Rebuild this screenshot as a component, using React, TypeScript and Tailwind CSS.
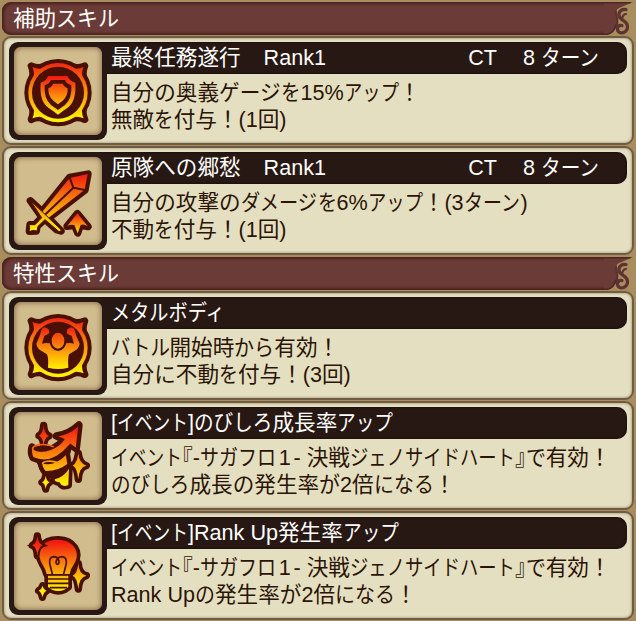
import type { ReactNode } from "react";

const OUTLINE = "#4a1004";

const Gradient = ({ id, y1, y2 }: { id: string; y1: number; y2: number }) => (
  <linearGradient id={id} gradientUnits="userSpaceOnUse" x1="0" x2="0" y1={y1} y2={y2}>
    <stop offset="0" stopColor="#f01a10" />
    <stop offset="0.5" stopColor="#fb8a0c" />
    <stop offset="1" stopColor="#fff200" />
  </linearGradient>
);

// Round badge with four pointed corners, shared by the shield and the body icon
const Badge = ({ fill }: { fill: string }) => {
  const spikes =
    "M79 78 Q100 88 128 78 L190 78 Q218 88 239 78 Q229 99 239 127 L239 189 Q229 217 239 238 Q218 228 190 238 L128 238 Q100 228 79 238 Q89 217 79 189 L79 127 Q89 99 79 78Z";
  return (
    <>
      <path d={spikes} fill={OUTLINE} stroke={OUTLINE} strokeWidth="22" strokeLinejoin="round" />
      <circle cx="159" cy="158" r="101" fill={OUTLINE} />
      <path d={spikes} fill={fill} transform="translate(159 158) scale(.96) translate(-159 -158)" />
      <circle cx="159" cy="158" r="89" fill={fill} />
      <circle cx="159" cy="158" r="78" fill={OUTLINE} />
    </>
  );
};

const ShieldIcon = () => (
  <svg viewBox="12 6 294 294" className="size-full">
    <defs>
      <Gradient id="shield-badge" y1={58} y2={238} />
      <Gradient id="shield-body" y1={110} y2={224} />
    </defs>
    <Badge fill="url(#shield-badge)" />
    <path
      d="M129 108 H188 Q192 122 211 128 Q215 184 186 205 Q172 214 159 224 Q146 214 132 205 Q102 184 107 128 Q126 122 129 108Z"
      fill="url(#shield-body)"
    />
    <path
      d="M138 120 H180 Q184 131 199 136 Q202 176 180 195 Q170 202 159 210 Q148 202 138 195 Q116 176 119 136 Q134 131 138 120Z"
      fill={OUTLINE}
    />
    <path
      d="M145 131 H173 Q178 141 188 145 Q189 169 173 182 L159 193 L145 182 Q129 169 130 145 Q140 141 145 131Z"
      fill="url(#shield-body)"
    />
  </svg>
);

const BodyIcon = () => (
  <svg viewBox="12 6 294 294" className="size-full">
    <defs>
      <Gradient id="body-badge" y1={58} y2={238} />
      <Gradient id="body-man" y1={92} y2={222} />
    </defs>
    <Badge fill="url(#body-badge)" />
    <path
      d="M109 105 Q114 94 123 98 L131 103 L133 114 Q125 121 118 122 L111 146 Q122 143 134 145 L149 157 Q159 171 170 157 L184 145 Q197 143 207 146 L200 122 Q192 120 185 114 L187 103 L195 98 Q204 94 209 105 L213 120 L224 146 Q222 160 208 168 L192 178 Q188 191 190 218 Q160 226 129 218 Q131 190 126 178 L110 168 Q96 160 94 146 L105 120Z"
      fill="url(#body-man)"
    />
    <ellipse cx="159" cy="137" rx="25" ry="31" fill={OUTLINE} />
    <ellipse cx="159" cy="137" rx="19" ry="24" fill="url(#body-man)" />
  </svg>
);

const SwordIcon = () => (
  <svg viewBox="12 6 294 294" className="size-full">
    <defs>
      <Gradient id="sword" y1={70} y2={244} />
      <Gradient id="sword-up" y1={190} y2={254} />
    </defs>
    <g stroke={OUTLINE} strokeWidth="22" strokeLinejoin="round" fill={OUTLINE}>
      <path d="M194 82 L249 72 L240 120 L130 205 L112 184Z" />
      <path d="M76 152 L119 192 L168 243 L155 239 L120 208 L96 229 L94 243 L73 244 L75 224 L91 223 L111 202Z" />
      <path d="M217 191 L249 230 L226 226 L218 249 L209 226 L186 229Z" />
    </g>
    <path d="M194 84 L248 72 L239 119 L129 205 L112 185Z" fill="url(#sword)" />
    <path d="M194 83 L205 113 L240 120 M205 113 L120 194" fill="none" stroke={OUTLINE} strokeWidth="6" />
    <path
      d="M74 149 L120 193 L170 241 L162 245 L120 209 L99 229 L96 243 Q84 239 72 245 Q76 233 72 224 L90 224 L110 203Z"
      fill="url(#sword)"
      stroke={OUTLINE}
      strokeWidth="3"
    />
    <path d="M217 190 L248 229 Q236 221 227 225 L218 250 L208 225 Q196 222 187 228Z" fill="url(#sword-up)" />
  </svg>
);

const SpiralArrowIcon = () => {
  const arrow = "M222 66 L214 137 L196 124 Q140 190 84 164 Q76 148 81 132 Q95 153 137 139 Q166 127 176 109 L154 99 Q193 94 222 66Z";
  const middle = "M184 152 L189 184 Q160 207 121 206 Q109 194 110 178 Q144 192 184 152Z";
  const bottom = "M192 197 L190 246 Q170 254 164 238 Q148 237 149 229 Q176 222 192 197Z";
  const sparks = [
    "M116 67 Q118 94 132 99 Q118 103 116 128 Q114 103 102 98 Q114 93 116 67Z",
    "M220 151 Q222 181 244 188 Q222 192 220 229 Q216 192 203 188 Q216 182 220 151Z",
    "M122 218 Q124 233 134 238 Q124 242 122 258 Q120 242 111 238 Q120 233 122 218Z",
  ];
  return (
    <svg viewBox="12 12 294 294" className="size-full">
      <defs>
        <Gradient id="spiral" y1={72} y2={244} />
      </defs>
      <g fill={OUTLINE} stroke={OUTLINE} strokeWidth="22" strokeLinejoin="round">
        <path d={arrow} />
        <path d={middle} />
        <path d={bottom} />
        {sparks.map((d) => (
          <path key={d} d={d} />
        ))}
        <path d="M90 140 L119 205 L160 225 L188 140Z" />
      </g>
      <g fill="url(#spiral)">
        <path d={bottom} />
        <path d={middle} stroke={OUTLINE} strokeWidth="4" />
        <path d={arrow} stroke={OUTLINE} strokeWidth="4" />
        {sparks.map((d) => (
          <path key={d} d={d} />
        ))}
      </g>
      <path
        d="M84 141 C76 125 118 119 146 131 M113 183 C112 175 136 170 160 179"
        fill="none"
        stroke="url(#spiral)"
        strokeWidth="5"
      />
    </svg>
  );
};

const BulbIcon = () => {
  const bulb = "M125 177 Q122 162 112 147 C88 105 115 73 160 74 C205 75 230 112 207 147 Q196 162 194 177Z";
  const base = "M129 181 H190 V216 L178 224 Q160 232 141 224 L129 216Z";
  const sparks = [
    "M97 63 Q99 85 113 91 Q100 95 97 122 Q95 95 82 91 Q95 85 97 63Z",
    "M220 146 Q222 177 244 182 Q222 187 220 222 Q216 187 203 182 Q216 177 220 146Z",
    "M113 212 Q115 223 125 227 Q115 232 112 247 Q110 232 101 227 Q110 223 113 212Z",
  ];
  return (
    <svg viewBox="12 6 294 294" className="size-full">
      <defs>
        <Gradient id="bulb" y1={80} y2={222} />
      </defs>
      <g fill={OUTLINE} stroke={OUTLINE} strokeWidth="22" strokeLinejoin="round">
        <path d={bulb} />
        <path d={base} />
        {sparks.map((d) => (
          <path key={d} d={d} />
        ))}
      </g>
      {/* dark gap between the left spark and the glass */}
      <path d={bulb} fill="url(#bulb)" />
      <path d={sparks[0]} fill={OUTLINE} stroke={OUTLINE} strokeWidth="12" />
      <g fill="url(#bulb)">
        <path d={base} />
        {sparks.map((d) => (
          <path key={d} d={d} />
        ))}
      </g>
      <g fill="none" stroke={OUTLINE} strokeLinecap="round" strokeWidth="5">
        <path d="M142 177 L134 145 Q132 126 146 125 C163 125 166 148 157 148 C149 148 153 126 171 125 Q186 126 184 145 L176 177" />
        <path d="M127 180 H193 M127 192 H193 M130 205 H190 M136 218 H184" />
      </g>
    </svg>
  );
};

const Flourish = () => (
  <svg viewBox="0 0 30 33" className="-ml-1 h-[33px] w-[30px] shrink-0" fill="none" stroke="#5d3230" strokeLinecap="round">
    <path d="M0 0 H29 Q22 3 17.5 5 Q12 6.5 12.5 10 Q14 16 12.5 22 Q11 32 2 33 H0Z" fill="#6b3c37" stroke="none" />
    <path d="M0 .8 H26 M0 32.2 H3 Q10 31 12 23" stroke="#512624" strokeWidth="1.6" />
    <path d="M22 7.5 Q18 6.5 15.5 10 Q13.500 15 18.5 18 Q24 21 23.5 26 Q22 31 17 31 Q13 30 13.5 26 Q14.5 22.5 18 23.5" strokeWidth="3.2" />
    <path d="M22 12 Q19 12 18 17 M12 10 Q14 18 13 26" strokeWidth="2.2" />
  </svg>
);

const EM = 21.6;

// A run of full-width glyphs squeezed into a narrower width
const Narrow = ({ text, width }: { text: string; width: number }) => (
  <span
    className="inline-block origin-left"
    style={{ width, transform: `scaleX(${width / (text.length * EM)})` }}
  >
    {text}
  </span>
);

type Part = string | [text: string, width: number];

const Parts = ({ parts }: { parts: Part[] }) => (
  <>
    {parts.map((part, i) =>
      typeof part === "string" ? (
        <span key={i}>{part}</span>
      ) : (
        <Narrow key={i} text={part[0]} width={part[1]} />
      )
    )}
  </>
);

const SectionTitle = ({ parts }: { parts: Part[] }) => (
  <header className="ml-[2px] flex h-[33px]">
    <h2 className="w-[606px] rounded-l-[9px] bg-[#6b3c37] pl-[11px] leading-[33px] text-white shadow-[inset_2px_2px_3px_#4b2220,inset_0_-2px_3px_#4b2220]">
      <Parts parts={parts} />
    </h2>
    <Flourish />
  </header>
);

type Skill = { icon: ReactNode; name: Part[]; rank?: string; turns?: string; lines: ReactNode[] };

const SkillCard = ({ icon, name, rank, turns, lines }: Skill) => (
  <article className="mx-[2px] flex h-[109px] rounded-[9px] border-2 border-[#705c42] bg-[#e5dfc2] pt-[4px] pr-[5px] pl-[5px] shadow-[inset_0_0_3px_#8d8068]">
    <div className="z-10 size-[98px] shrink-0 rounded-[9px] bg-[#281814] p-[5px]">
      <div className="relative size-full rounded-[7px] bg-[#d1bc8d] shadow-[inset_0_0_5px_1px_#8f7050]">
        <div className="absolute -inset-[5px]">{icon}</div>
      </div>
    </div>
    <div className="-ml-3 min-w-0 flex-1">
      <h3 className="flex h-8 items-center rounded-r-[10px] bg-[#281814] pl-4 leading-8 text-white shadow-[inset_0_0_3px_#120806]">
        <span>
          <Parts parts={name} />
        </span>
        {rank && <span className="ml-[23px]">{rank}</span>}
        {turns && (
          <span className="mr-[27px] ml-auto flex">
            CT
            <span className="ml-[26px] w-[18px]">{turns}</span>
            <Narrow text="ターン" width={59} />
          </span>
        )}
      </h3>
      <div className="pt-[5px] pl-4 leading-[27px] text-[#2b1402]">
        {lines.map((line, i) => (
          <p key={i}>{line}</p>
        ))}
      </div>
    </div>
  </article>
);

const eventLine = (
  <>
    <Narrow text="イベント" width={71} />
    <span className="[font-feature-settings:'halt']">『</span>
    <span>-</span>
    <Narrow text="サガフロ" width={76} />
    <span className="inline-block w-[17.5px] text-center">1</span>
    <span>- 決戦</span>
    <Narrow text="ジェノサイドハート" width={165} />
    <span className="[font-feature-settings:'halt']">』</span>
    <Narrow text="で" width={20} />
    <span>有効！</span>
  </>
);

const supportSkills: Skill[] = [
  {
    icon: <ShieldIcon />,
    name: ["最終任務遂行"],
    rank: "Rank1",
    turns: "8",
    lines: [
      <Parts parts={["自分の奥義", ["ゲージ", 62], ["を", 19.5], "15%", ["アップ", 55], "！"]} />,
      <Parts parts={["無敵", ["を", 19.5], "付与！(1回)"]} />,
    ],
  },
  {
    icon: <SwordIcon />,
    name: ["原隊への郷愁"],
    rank: "Rank1",
    turns: "8",
    lines: [
      <Parts
        parts={["自分の攻撃の", ["ダメージ", 77], ["を", 19], "6%", ["アップ", 55], "！(3", ["ターン", 57], ")"]}
      />,
      <Parts parts={["不動", ["を", 19.5], "付与！(1回)"]} />,
    ],
  },
];

const traitSkills: Skill[] = [
  {
    icon: <BodyIcon />,
    name: [["メタルボディ", 115]],
    lines: [
      <Parts parts={[["バトル", 58.5], "開始時", ["から", 40], "有効！"]} />,
      <Parts parts={["自分に不動", ["を", 19], "付与！(3回)"]} />,
    ],
  },
  {
    icon: <SpiralArrowIcon />,
    name: ["[", ["イベント", 71], "]", ["のびしろ", 78.5], "成長率", ["アップ", 56]],
    lines: [
      eventLine,
      <Parts parts={[["のびしろ", 78.5], "成長の発生率", ["が", 21], "2倍", ["になる", 60], "！"]} />,
    ],
  },
  {
    icon: <BulbIcon />,
    name: ["[", ["イベント", 71], "]Rank Up発生率", ["アップ", 56]],
    lines: [
      eventLine,
      <Parts parts={["Rank Up", ["の", 20], "発生率が2倍", ["になる", 60], "！"]} />,
    ],
  },
];

export default function App() {
  return (
    <main className="h-[621px] w-[636px] overflow-hidden bg-[#a88d5e] pt-[2px] font-['Liberation_Sans','Noto_Sans_CJK_JP',sans-serif] text-[21.6px] leading-none whitespace-nowrap">
      <SectionTitle parts={["補助", ["スキル", 63]]} />
      <section className="flex flex-col gap-px pt-px">
        {supportSkills.map((skill, i) => (
          <SkillCard key={i} {...skill} />
        ))}
      </section>
      <div className="pt-[2px]">
        <SectionTitle parts={["特性", ["スキル", 63]]} />
      </div>
      <section className="flex flex-col gap-px pt-px">
        {traitSkills.map((skill, i) => (
          <SkillCard key={i} {...skill} />
        ))}
      </section>
    </main>
  );
}
